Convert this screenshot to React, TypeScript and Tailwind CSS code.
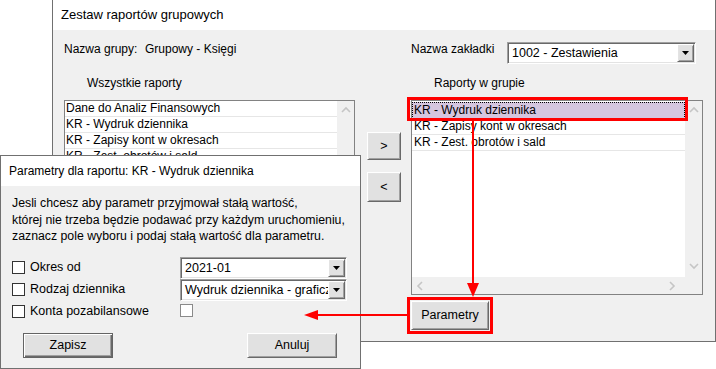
import React from 'react'

const font = { fontFamily: '"Liberation Sans", Arial, sans-serif' }

// classic raised 3D button
function Btn({ label, w, h, def = false }: { label: string; w: string; h: string; def?: boolean }) {
  const cls = def
    ? 'border border-[#646464] shadow-[inset_1px_1px_0_#ffffff,inset_-1px_-1px_0_#696969,inset_-2px_-2px_0_#a0a0a0]'
    : 'border border-t-white border-l-white border-r-[#696969] border-b-[#696969] shadow-[inset_1px_1px_0_#e3e3e3,inset_-1px_-1px_0_#a0a0a0]'
  return (
    <div className={`${w} ${h} ${cls} bg-[#e1e1e1] flex items-center justify-center text-[12.5px] text-black`}>
      {label}
    </div>
  )
}

function DropBtn() {
  return (
    <div className="w-[17px] h-full border border-t-white border-l-white border-r-[#696969] border-b-[#696969] shadow-[inset_1px_1px_0_#e3e3e3,inset_-1px_-1px_0_#a0a0a0] bg-[#e1e1e1] flex items-center justify-center">
      <svg width="7" height="4" viewBox="0 0 7 4"><path d="M0 0h7L3.5 4z" fill="#000" /></svg>
    </div>
  )
}

function Combo({ value, w }: { value: string; w: string }) {
  return (
    <div className={`${w} h-[22px] bg-white flex border border-t-[#a0a0a0] border-l-[#a0a0a0] border-r-white border-b-white shadow-[inset_1px_1px_0_#696969,inset_-1px_-1px_0_#e3e3e3] p-[1px]`}>
      <div className="flex-1 min-w-0 overflow-hidden whitespace-nowrap pl-[3px] text-[12.5px] leading-[19px] text-black">{value}</div>
      <DropBtn />
    </div>
  )
}

function Check({ light = false }: { light?: boolean }) {
  return <div className={`w-[13px] h-[13px] bg-white border ${light ? 'border-[#8a8a8a]' : 'border-[#333333]'}`} />
}

function Chevron({ dir }: { dir: 'up' | 'down' | 'left' | 'right' }) {
  const d = {
    up: 'M1 6l4-4 4 4',
    down: 'M1 2l4 4 4-4',
    left: 'M6 1L2 5l4 4',
    right: 'M2 1l4 4-4 4',
  }[dir]
  return (
    <svg width="10" height="10" viewBox="0 0 10 10">
      <path d={d} fill="none" stroke="#c5c5c5" strokeWidth="1.6" />
    </svg>
  )
}

const allReports = ['Dane do Analiz Finansowych', 'KR - Wydruk dziennika', 'KR - Zapisy kont w okresach', 'KR - Zest. obrotów i sald']
const groupReports = ['KR - Wydruk dziennika', 'KR - Zapisy kont w okresach', 'KR - Zest. obrotów i sald']

export default function App() {
  return (
    <div className="relative w-[716px] h-[369px] bg-white overflow-hidden text-black" style={font}>
      {/* main window */}
      <div className="absolute left-[52px] top-0 w-[664px] h-[342px] border-x border-b border-[#707070] flex flex-col">
        <div className="h-[30px] bg-white pl-[8px] flex items-center text-[13px]">Zestaw raportów grupowych</div>
        <div className="flex-1 bg-[#f0f0f0] pt-[12px] text-[12px]">
          {/* row 1 */}
          <div className="flex items-start h-[21px] pl-[11px]">
            <div className="w-[81px] leading-[14px]">Nazwa grupy:</div>
            <div className="w-[266px] leading-[14px]">Grupowy - Księgi</div>
            <div className="w-[96px] leading-[14px]">Nazwa zakładki</div>
            <Combo value="1002 - Zestawienia" w="w-[189px]" />
          </div>
          {/* row 2 */}
          <div className="flex mt-[13px] leading-[14px]">
            <div className="w-[381px] pl-[34px]">Wszystkie raporty</div>
            <div>Raporty w grupie</div>
          </div>
          {/* row 3 */}
          <div className="flex items-start mt-[10px] pl-[11px]">
            <div className="w-[291px] h-[195px] bg-white border border-[#828282] flex">
              <div className="flex-1">
                {allReports.map(r => (
                  <div key={r} className="h-[16px] border-b border-[#e6e6e6] pl-[1px] leading-[15px] whitespace-nowrap">{r}</div>
                ))}
              </div>
              <div className="w-[17px] bg-[#f0f0f0] flex flex-col items-center pt-[5px]">
                <Chevron dir="up" />
              </div>
            </div>
            <div className="w-[34px] ml-[12px] mt-[32px] flex flex-col gap-[12px]">
              <Btn label=">" w="w-[34px]" h="h-[28px]" />
              <Btn label="<" w="w-[34px]" h="h-[30px]" />
            </div>
            <div className="w-[292px] h-[195px] ml-[10px] bg-white border border-[#828282] flex flex-col">
              <div className="flex flex-1">
                <div className="flex-1 pt-[1px]">
                  {groupReports.map((r, i) => (
                    <div
                      key={r}
                      className={i === 0
                        ? 'h-[17px] bg-[#d5c6df] border border-dotted border-black pl-[1px] leading-[15px] whitespace-nowrap'
                        : 'h-[16px] border-b border-[#e6e6e6] pl-[2px] leading-[15px] whitespace-nowrap'}
                    >
                      {r}
                    </div>
                  ))}
                </div>
                <div className="w-[17px] bg-[#f0f0f0] flex flex-col items-center justify-between py-[5px]">
                  <Chevron dir="up" />
                  <Chevron dir="down" />
                </div>
              </div>
              <div className="h-[17px] bg-[#f0f0f0] flex items-center justify-between pl-[4px] pr-[24px]">
                <Chevron dir="left" />
                <Chevron dir="right" />
              </div>
            </div>
          </div>
          {/* row 4 */}
          <div className="mt-[6px] pl-[358px]">
            <Btn label="Parametry" w="w-[78px]" h="h-[29px]" />
          </div>
        </div>
      </div>

      {/* parameters window */}
      <div className="absolute left-0 top-[155px] w-[361px] h-[214px] border border-[#707070] flex flex-col">
        <div className="h-[30px] bg-white pl-[8px] flex items-center text-[12px]">Parametry dla raportu: KR - Wydruk dziennika</div>
        <div className="flex-1 bg-[#f0f0f0] pt-[9px] text-[12px]">
          <div className="pl-[11px] leading-[16.5px] text-[12.3px]">
            <div>Jesli chcesz aby parametr przyjmował stałą wartość,</div>
            <div>której nie trzeba będzie podawać przy każdym uruchomieniu,</div>
            <div>zaznacz pole wyboru i podaj stałą wartość dla parametru.</div>
          </div>
          <div className="grid grid-cols-[168px_167px] grid-rows-[22px_22px_22px] mt-[12px] pl-[11px] text-[12.5px]">
            <div className="flex items-center gap-[5px]"><Check /><span>Okres od</span></div>
            <Combo value="2021-01" w="w-[167px]" />
            <div className="flex items-center gap-[5px]"><Check /><span>Rodzaj dziennika</span></div>
            <Combo value="Wydruk dziennika - graficzny" w="w-[167px]" />
            <div className="flex items-center gap-[5px]"><Check /><span>Konta pozabilansowe</span></div>
            <div className="pt-[3px]"><Check light /></div>
          </div>
          <div className="flex mt-[10px] pl-[22px]">
            <Btn label="Zapisz" w="w-[90px]" h="h-[25px]" def />
            <div className="ml-[134px]"><Btn label="Anuluj" w="w-[90px]" h="h-[25px]" /></div>
          </div>
        </div>
      </div>

      {/* red annotations */}
      <svg className="absolute inset-0 pointer-events-none" width="716" height="369">
        <rect x="408.5" y="98.5" width="278" height="21" fill="none" stroke="#ff0000" strokeWidth="3" />
        <line x1="473" y1="120" x2="473" y2="284" stroke="#ff0000" strokeWidth="2" />
        <path d="M467 283h12l-6 14z" fill="#ff0000" />
        <rect x="408.5" y="298.5" width="83" height="34" fill="none" stroke="#ff0000" strokeWidth="3" />
        <line x1="407" y1="315" x2="316" y2="315" stroke="#ff0000" strokeWidth="2" />
        <path d="M318 310v10l-14-5z" fill="#ff0000" />
      </svg>
    </div>
  )
}
